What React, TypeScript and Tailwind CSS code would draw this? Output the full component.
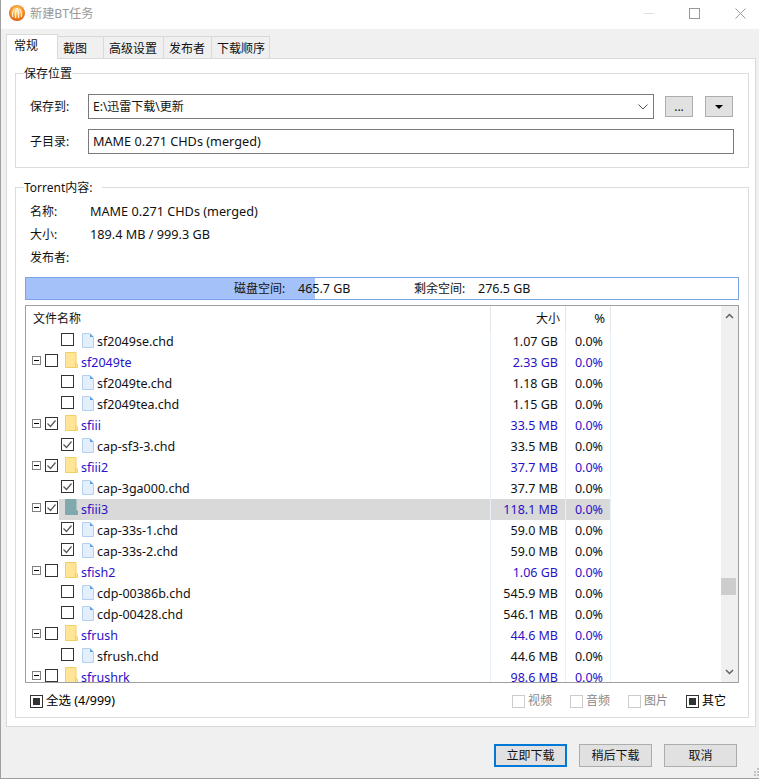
/**
 * New BT task dialog
 */

const FONT = "font-['Noto_Sans','Noto_Sans_CJK_SC',sans-serif]";

type Row = {
  name: string;
  size: string;
  folder?: boolean;
  checked?: boolean;
  selected?: boolean;
};

const rows: Row[] = [
  { name: 'sf2049se.chd', size: '1.07 GB' },
  { name: 'sf2049te', size: '2.33 GB', folder: true },
  { name: 'sf2049te.chd', size: '1.18 GB' },
  { name: 'sf2049tea.chd', size: '1.15 GB' },
  { name: 'sfiii', size: '33.5 MB', folder: true, checked: true },
  { name: 'cap-sf3-3.chd', size: '33.5 MB', checked: true },
  { name: 'sfiii2', size: '37.7 MB', folder: true, checked: true },
  { name: 'cap-3ga000.chd', size: '37.7 MB', checked: true },
  { name: 'sfiii3', size: '118.1 MB', folder: true, checked: true, selected: true },
  { name: 'cap-33s-1.chd', size: '59.0 MB', checked: true },
  { name: 'cap-33s-2.chd', size: '59.0 MB', checked: true },
  { name: 'sfish2', size: '1.06 GB', folder: true },
  { name: 'cdp-00386b.chd', size: '545.9 MB' },
  { name: 'cdp-00428.chd', size: '546.1 MB' },
  { name: 'sfrush', size: '44.6 MB', folder: true },
  { name: 'sfrush.chd', size: '44.6 MB' },
  { name: 'sfrushrk', size: '98.6 MB', folder: true },
];

const tabs = [
  { label: '截图', width: 'w-[47px]' },
  { label: '高级设置', width: 'w-[61px]' },
  { label: '发布者', width: 'w-[49px]' },
  { label: '下载顺序', width: 'w-[59px]' },
];

function AppIcon() {
  return (
    <svg width="16" height="16" viewBox="0 0 16 16">
      <defs>
        <radialGradient id="ball" cx="50%" cy="40%" r="60%">
          <stop offset="0%" stopColor="#ffe9a8" />
          <stop offset="55%" stopColor="#f9a436" />
          <stop offset="100%" stopColor="#d9540f" />
        </radialGradient>
      </defs>
      <circle cx="8" cy="8" r="8" fill="url(#ball)" />
      <path d="M3.500 12C3 8 4 5.500 6 3.500M6.500 13C6 9 6.500 5 8 3M9.500 13C10 9 9.500 5 8 3M12.500 12C13 8 12 5.500 10 3.500" fill="none" stroke="#fff" strokeWidth=".9" />
    </svg>
  );
}

function Folder({ selected }: { selected?: boolean }) {
  const fill = selected ? '#7fa9ac' : '#ffe595';
  const edge = selected ? '#7fa9ac' : '#f2cf63';
  return (
    <svg width="13" height="16" viewBox="0 0 13 16" className="shrink-0 self-start">
      <path d="M.5.5h10.500v10.500l1.500 1v3.500H.5z" fill={fill} stroke={edge} />
      <path d="M10.500 15v-4" stroke={edge} />
    </svg>
  );
}

function FileIcon() {
  return (
    <svg width="12" height="15" viewBox="0 0 12 15" className="shrink-0">
      <path d="M.5.500H8L11.500 4v10.500H.5z" fill="#e3effc" stroke="#b5d0ef" />
      <path d="M8 .5V4h3.500z" fill="#5c9fe0" />
    </svg>
  );
}

function Checkbox({ checked }: { checked?: boolean }) {
  return (
    <svg width="13" height="13" viewBox="0 0 13 13" className="shrink-0">
      <rect x=".5" y=".5" width="12" height="12" fill="#fff" stroke="#333" />
      {checked && <path d="M2.500 6.500l3 3 5-6" fill="none" stroke="#555" strokeWidth="1.200" />}
    </svg>
  );
}

function Expander() {
  return (
    <div className="w-[9px] h-[9px] border border-[#808080] bg-white flex items-center justify-center shrink-0">
      <div className="w-[5px] h-px bg-black" />
    </div>
  );
}

// square-filled tri state box used at the bottom of the panel
function FilterBox({ label, on, className, labelClass }: { label: string; on?: boolean; className?: string; labelClass?: string }) {
  return (
    <div className={`flex items-center ${className ?? ''}`}>
      <div className={`w-[13px] h-[13px] border flex items-center justify-center ${on ? 'border-[#333]' : 'border-[#ccc]'}`}>
        {on && <div className="w-[7px] h-[7px] bg-[#333]" />}
      </div>
      <span className={`ml-[3px] ${on ? 'text-black' : 'text-[#8a8a8a]'} ${labelClass ?? ''}`}>{label}</span>
    </div>
  );
}

function FileRow({ row }: { row: Row }) {
  const color = row.folder ? 'text-[#2a10c8]' : 'text-[#111]';
  const sel = row.selected ? 'bg-[#d9d9d9]' : '';
  return (
    <div className="flex h-[21px] shrink-0 w-[585px] text-[12.500px]">
      <div className="w-[465px] flex items-center border-r border-[#e8f1fb] shrink-0">
        {row.folder ? (
          <>
            <div className="ml-[6px] -mt-[5px]"><Expander /></div>
            <div className="ml-[4px] -mt-[5px]"><Checkbox checked={row.checked} /></div>
            <div className={`ml-px h-full flex-1 flex items-center pl-[6px] ${sel}`}>
              <Folder selected={row.selected} />
              <span className={`ml-[3px] pt-[2px] ${color}`}>{row.name}</span>
            </div>
          </>
        ) : (
          <>
            <div className="ml-[35px] -mt-[4px]"><Checkbox checked={row.checked} /></div>
            <div className="ml-[8px] -mt-[3px]"><FileIcon /></div>
            <span className={`ml-[3px] pt-[2px] ${color}`}>{row.name}</span>
          </>
        )}
      </div>
      <div className={`w-[75px] pr-[7px] text-right leading-[21px] border-r border-[#e8f1fb] shrink-0 ${color} ${sel}`}>
        {row.size}
      </div>
      <div className={`w-[45px] pr-[7px] text-right leading-[21px] border-r border-[#e8f1fb] shrink-0 ${color} ${sel}`}>
        0.0%
      </div>
    </div>
  );
}

function Button({ label, primary }: { label: string; primary?: boolean }) {
  return (
    <button
      className={`h-[23px] w-[73px] bg-[#e1e1e1] flex items-center justify-center ${
        primary ? 'border-2 border-[#0078d7]' : 'border border-[#adadad]'
      }`}
    >
      {label}
    </button>
  );
}

export default function App() {
  return (
    <div className={`${FONT} relative w-[759px] h-[779px] bg-[#f0f0f0] border-l border-b border-[#a0a0a0] flex flex-col text-[12px] text-[#111]`}>
      {/* Title bar */}
      <div className="h-[29px] bg-white flex items-center shrink-0 text-[#999]">
        <div className="ml-[8px] mb-[3px]"><AppIcon /></div>
        <span className="ml-[5px] text-[12.200px]">新建BT任务</span>
        <div className="ml-auto flex items-center mb-[2px]">
          <div className="w-[10px] h-px bg-[#e0e0e0] mr-[35px]" />
          <div className="w-[11px] h-[11px] border border-[#999] mr-[35px]" />
          <svg width="11" height="11" viewBox="0 0 11 11" className="mr-[13px]">
            <path d="M.5.500l10 10M10.500.5l-10 10" stroke="#999" />
          </svg>
        </div>
      </div>

      {/* Tabs */}
      <div className="flex items-end h-[29px] pl-[5px] shrink-0 relative z-10">
        <div className="h-[25px] w-[52px] -mb-px bg-white border border-b-0 border-[#d9d9d9] pl-[7px] leading-[22px]">常规</div>
        {tabs.map((tab) => (
          <div
            key={tab.label}
            className={`${tab.width} h-[23px] -ml-px -mb-px bg-[#f0f0f0] border border-[#d9d9d9] pl-[5px] leading-[23px]`}
          >
            {tab.label}
          </div>
        ))}
      </div>

      {/* Panel */}
      <div className="ml-[5px] w-[750px] h-[669px] bg-white border border-[#d9d9d9] px-[8px] pt-[14px] shrink-0">
        <div className="relative h-[95px] w-[734px] border border-[#dcdcdc] pt-[20px] pl-[14px]">
          <span className="absolute left-[8px] -top-[8px] bg-white leading-[16px]">保存位置</span>
          <div className="flex items-center h-[25px]">
            <span className="w-[58px]">保存到:</span>
            <div className="w-[566px] h-[25px] border border-[#7a7a7a] flex items-center justify-between pl-[4px] pr-[5px]">
              <span>E:\迅雷下载\更新</span>
              <svg width="10" height="6" viewBox="0 0 10 6"><path d="M.5.500l4.500 4.500 4.500-4.500" fill="none" stroke="#555" /></svg>
            </div>
            <div className="ml-[11px] w-[28px] h-[21px] bg-[#e1e1e1] border border-[#adadad] flex items-end justify-center leading-none pb-[3px]">...</div>
            <div className="ml-[12px] w-[28px] h-[21px] bg-[#e1e1e1] border border-[#adadad] flex items-center justify-center">
              <div className="w-0 h-0 border-x-[4px] border-x-transparent border-t-[4px] border-t-black" />
            </div>
          </div>
          <div className="flex items-center h-[25px] mt-[10px]">
            <span className="w-[58px]">子目录:</span>
            <div className="w-[646px] h-[25px] border border-[#7a7a7a] flex items-center pl-[4px] text-[12.700px]">MAME 0.271 CHDs (merged)</div>
          </div>
        </div>

        <div className="relative mt-[19px] h-[531px] w-[734px] border border-[#dcdcdc] px-[9px]">
          <span className="absolute left-[8px] -top-[8px] bg-white pr-[9px] leading-[16px]">Torrent内容:</span>
          <div className="pt-[15px] pl-[5px] flex flex-col gap-[7px] leading-[16px]">
            <div className="flex h-[16px]"><span className="w-[60px] pt-px">名称:</span><span className="text-[12.700px]">MAME 0.271 CHDs (merged)</span></div>
            <div className="flex h-[16px]"><span className="w-[60px] pt-px">大小:</span><span className="text-[12.700px]">189.4 MB / 999.3 GB</span></div>
            <div className="flex h-[16px]"><span className="w-[60px] pt-px">发布者:</span></div>
          </div>

          {/* Disk space */}
          <div className="relative mt-[12px] h-[23px] w-[714px] border border-[#7ba3e8]">
            <div className="h-full w-[289px] bg-[#a4c2f9]" />
            <div className="absolute inset-0 flex items-center pl-[208px] pt-px">
              <span className="w-[64px]">磁盘空间:</span>
              <span className="w-[116px] text-[12.500px]">465.7 GB</span>
              <span className="w-[64px]">剩余空间:</span>
              <span className="text-[12.500px]">276.5 GB</span>
            </div>
          </div>

          {/* File list */}
          <div className="mt-[5px] h-[378px] w-[714px] border border-[#a0a0a0] flex overflow-hidden">
            <div className="flex-1 flex flex-col overflow-hidden">
              <div className="flex h-[25px] shrink-0 w-[585px]">
                <div className="w-[465px] pl-[7px] leading-[25px] border-r border-[#e5e5e5]">文件名称</div>
                <div className="w-[75px] pr-[5px] text-right leading-[25px] border-r border-[#e5e5e5]">大小</div>
                <div className="w-[45px] pr-[5px] text-right leading-[25px] text-[13px] border-r border-[#e5e5e5]">%</div>
              </div>
              {rows.map((row) => (
                <FileRow key={row.name} row={row} />
              ))}
            </div>
            <div className="w-[17px] bg-[#f0f0f0] flex flex-col items-center shrink-0">
              <svg width="9" height="6" viewBox="0 0 9 6" className="mt-[7px]"><path d="M1 5l3.500-3.500L8 5" fill="none" stroke="#606060" strokeWidth="1.500" /></svg>
              <div className="mt-[259px] h-[17px] w-[15px] self-start bg-[#cdcdcd]" />
              <svg width="9" height="6" viewBox="0 0 9 6" className="mt-[74px]"><path d="M1 1l3.500 3.500L8 1" fill="none" stroke="#606060" strokeWidth="1.500" /></svg>
            </div>
          </div>

          {/* Filters */}
          <div className="flex items-center h-[16px] mt-[10px] pl-[5px]">
            <FilterBox label="全选 (4/999)" on labelClass="text-[12.500px]" />
            <FilterBox label="视频" className="ml-auto" />
            <FilterBox label="音频" className="ml-[18px]" />
            <FilterBox label="图片" className="ml-[18px]" />
            <FilterBox label="其它" on className="ml-[18px] mr-[13px]" />
          </div>
        </div>
      </div>

      {/* Footer */}
      <div className="flex justify-end gap-[12px] pr-[22px] pt-[17px]">
        <Button label="立即下载" primary />
        <Button label="稍后下载" />
        <Button label="取消" />
      </div>

      {/* Resize grip */}
      <svg width="7" height="10" viewBox="0 0 7 10" className="absolute right-0 bottom-px">
        <path d="M5 1h2v2H5zM5 4h2v2H5zM2 4h2v2H2zM5 7h2v2H5zM2 7h2v2H2z" fill="#c4c4c4" />
      </svg>
    </div>
  );
}
